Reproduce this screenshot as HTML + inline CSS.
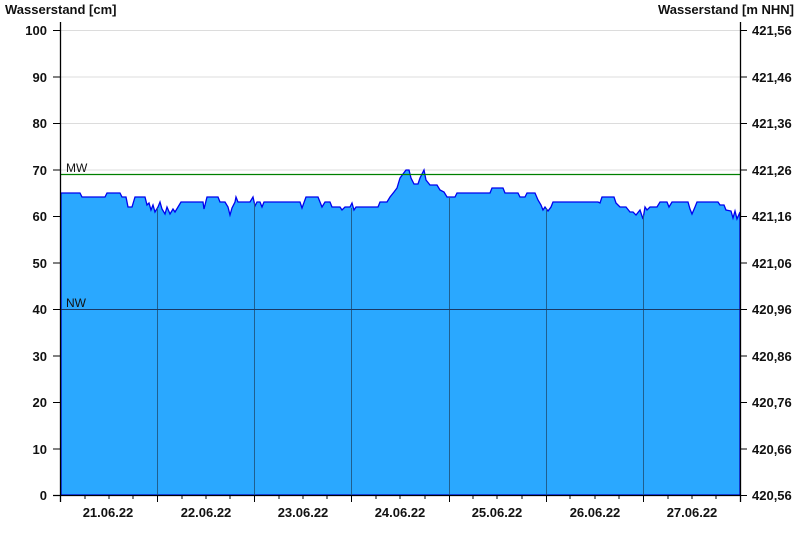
<!DOCTYPE html>
<html><head><meta charset="utf-8"><style>
body{margin:0;background:#fff;width:800px;height:550px;overflow:hidden}
svg{display:block}
text{font-family:"Liberation Sans",Arial,sans-serif;font-weight:bold;font-size:13px;fill:#111}
.s{font-weight:normal;font-size:12px}
</style></head><body>
<svg width="800" height="550" viewBox="0 0 800 550">
<g stroke="#dcdcdc" stroke-width="1">
<line x1="61" x2="740" y1="30.5" y2="30.5"/><line x1="61" x2="740" y1="77" y2="77"/>
<line x1="61" x2="740" y1="123.5" y2="123.5"/><line x1="61" x2="740" y1="170" y2="170"/>
<line x1="61" x2="740" y1="216.5" y2="216.5"/><line x1="61" x2="740" y1="263" y2="263"/>
<line x1="61" x2="740" y1="356" y2="356"/><line x1="61" x2="740" y1="402.5" y2="402.5"/>
<line x1="61" x2="740" y1="449" y2="449"/>
</g>
<polygon fill="#2aa8ff" stroke="#0000ee" stroke-width="1.3" points="61,495 61,193 80,193 82,197 105,197 107,193 120,193 122,197 126,197 128,207 132,207 135,197 145,197 147,205 149,203 151,210 153,205 155,212 158,207 160,202 162,209 165,214 167,207 170,214 173,209 175,212 178,207 181,202 203,202 204,209 207,197 218,197 220,202 225,202 228,207 230,215 232,208 235,202 236,197 238,202 250,202 253,197 255,206 257,202 260,202 262,207 264,202 300,202 302,208 306,197 318,197 320,202 322,207 325,202 330,202 332,207 340,207 342,210 345,207 350,207 352,203 354,210 356,207 378,207 380,202 387,202 390,197 394,192 397,188 400,178 403,174 406,170 409,170 411,178 414,184 418,184 420,178 424,170 426,180 430,185 437,185 440,190 444,192 447,197 455,197 457,193 470,193 490,193 492,188 503,188 505,193 518,193 520,197 525,197 527,193 535,193 538,200 541,205 543,210 545,207 548,211 551,207 553,202 598,202 600,203 602,197 614,197 616,203 620,207 626,207 630,212 633,212 636,215 640,210 643,219 645,207 647,210 650,207 657,207 660,202 667,202 669,207 672,202 688,202 690,209 692,214 695,207 697,202 718,202 720,205 724,205 726,210 731,211 733,218 735,211 737,219 740,212 740,495"/>
<g stroke="#1f5f8f" stroke-width="1">
<line x1="157.5" x2="157.5" y1="208" y2="495"/><line x1="254.5" x2="254.5" y1="203" y2="495"/>
<line x1="351.5" x2="351.5" y1="208" y2="495"/><line x1="449.5" x2="449.5" y1="198" y2="495"/>
<line x1="546.5" x2="546.5" y1="208" y2="495"/><line x1="643.5" x2="643.5" y1="215" y2="495"/>
</g>
<line x1="61" x2="740" y1="174.5" y2="174.5" stroke="#008000" stroke-width="1.3"/>
<line x1="61" x2="740" y1="309.5" y2="309.5" stroke="#1a3a66" stroke-width="1"/>
<text class="s" x="66" y="172">MW</text>
<text class="s" x="66" y="307">NW</text>
<g stroke="#000" stroke-width="1.3">
<line x1="60.5" x2="60.5" y1="22" y2="502"/><line x1="740.5" x2="740.5" y1="22" y2="502"/>
<line x1="53" x2="741" y1="495.5" y2="495.5"/>
</g>
<g stroke="#000" stroke-width="1">
<path d="M53 30.5h8M53 77h8M53 123.5h8M53 170h8M53 216.5h8M53 263h8M53 309.5h8M53 356h8M53 402.5h8M53 449h8"/>
<path d="M740 30.5h7M740 77h7M740 123.5h7M740 170h7M740 216.5h7M740 263h7M740 309.5h7M740 356h7M740 402.5h7M740 449h7M740 495.5h7"/>
<path d="M157.5 495v7M254.5 495v7M351.5 495v7M449.5 495v7M546.5 495v7M643.5 495v7"/>
<path d="M85 495v4M109 495v4M133 495v4M182 495v4M206 495v4M230 495v4M279 495v4M303 495v4M327 495v4M376 495v4M400 495v4M425 495v4M473 495v4M497 495v4M522 495v4M570 495v4M595 495v4M619 495v4M668 495v4M692 495v4M716 495v4"/>
</g>
<text x="5" y="14">Wasserstand [cm]</text>
<text x="794" y="14" text-anchor="end">Wasserstand [m NHN]</text>
<g text-anchor="end">
<text x="47" y="35">100</text><text x="47" y="82">90</text><text x="47" y="128">80</text>
<text x="47" y="175">70</text><text x="47" y="221">60</text><text x="47" y="268">50</text>
<text x="47" y="314">40</text><text x="47" y="361">30</text><text x="47" y="407">20</text>
<text x="47" y="454">10</text><text x="47" y="500">0</text>
</g>
<g>
<text x="752" y="35">421,56</text><text x="752" y="82">421,46</text><text x="752" y="128">421,36</text>
<text x="752" y="175">421,26</text><text x="752" y="221">421,16</text><text x="752" y="268">421,06</text>
<text x="752" y="314">420,96</text><text x="752" y="361">420,86</text><text x="752" y="407">420,76</text>
<text x="752" y="454">420,66</text><text x="752" y="500">420,56</text>
</g>
<g text-anchor="middle">
<text x="108" y="517">21.06.22</text><text x="206" y="517">22.06.22</text><text x="303" y="517">23.06.22</text>
<text x="400" y="517">24.06.22</text><text x="497" y="517">25.06.22</text><text x="595" y="517">26.06.22</text>
<text x="692" y="517">27.06.22</text>
</g>
</svg>
</body></html>
